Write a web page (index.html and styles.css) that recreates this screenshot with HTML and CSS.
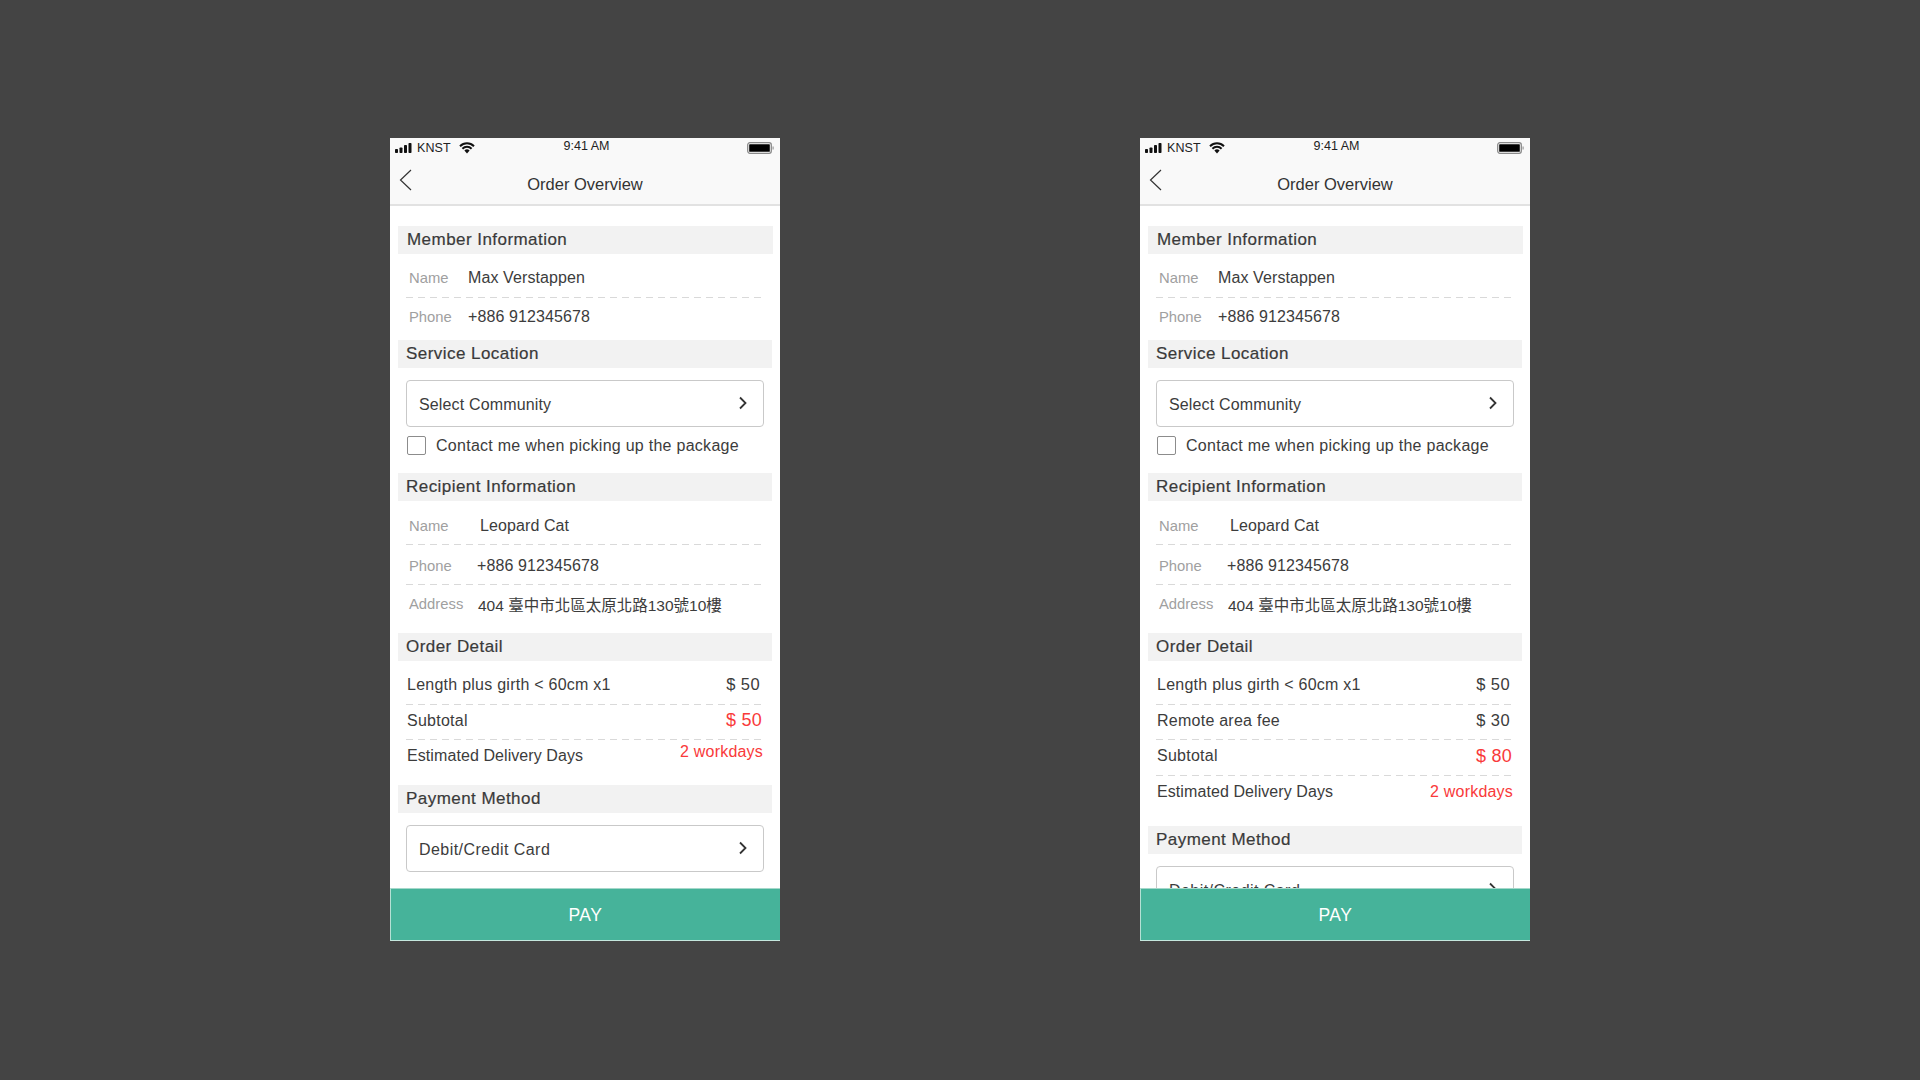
FILE: index.html
```html
<!DOCTYPE html>
<html lang="en">
<head>
<meta charset="utf-8">
<title>Order Overview</title>
<link rel="stylesheet" href="styles.css">
</head>
<body>
<main class="stage">

<section class="phone">
  <header class="status">
    <div class="status-left">
      <svg class="signal" width="18" height="10" viewBox="0 0 18 10"><rect x="0" y="6" width="3" height="4" rx=".8"/><rect x="4.5" y="4.5" width="3" height="5.5" rx=".8"/><rect x="9" y="2" width="3" height="8" rx=".8"/><rect x="13.5" y="0" width="3" height="10" rx=".8"/></svg>
      <span class="carrier">KNST</span>
      <svg class="wifi" width="16" height="12" viewBox="0 0 16 12"><path d="M1 4.2a10 10 0 0 1 14 0M3.4 6.7a6.6 6.6 0 0 1 9.2 0" fill="none" stroke="#111" stroke-width="2"/><path d="M5.4 8.6a3.6 3.6 0 0 1 5.2 0L8 11.4z" fill="#111"/></svg>
    </div>
    <span class="time">9:41 AM</span>
    <div class="status-right">
      <svg width="27" height="12" viewBox="0 0 27 12"><rect x=".7" y=".7" width="23.6" height="10.6" rx="2.2" fill="none" stroke="#8a8a8a" stroke-width="1.3"/><rect x="2.2" y="2.2" width="20.6" height="7.6" rx=".6" fill="#000"/><rect x="25.5" y="4.5" width="1.2" height="3" fill="#999"/></svg>
    </div>
  </header>
  <nav class="nav">
    <svg class="back" width="13" height="22" viewBox="0 0 13 22"><path d="M12 1 1.5 11 12 21" fill="none" stroke="#333" stroke-width="1.2"/></svg>
    <h1 class="title">Order Overview</h1>
  </nav>
  <div class="content">
    <h2 class="head head-first">Member Information</h2>
    <div class="row row-a dash"><span class="label">Name</span><span class="value">Max Verstappen</span></div>
    <div class="row row-b"><span class="label">Phone</span><span class="value">+886 912345678</span></div>

    <h2 class="head">Service Location</h2>
    <div class="select"><span>Select Community</span><svg class="chev" width="10" height="14" viewBox="0 0 10 14"><path d="M2 1.5 7.5 7 2 12.5" fill="none" stroke="#333" stroke-width="1.8"/></svg></div>
    <label class="check"><span class="box"></span><span>Contact me when picking up the package</span></label>

    <h2 class="head">Recipient Information</h2>
    <div class="row row-a dash rn"><span class="label">Name</span><span class="value">Leopard Cat</span></div>
    <div class="row row-c dash rp"><span class="label">Phone</span><span class="value">+886 912345678</span></div>
    <div class="row row-d ra"><span class="label">Address</span><span class="value addr">404 臺中市北區太原北路130號10樓</span></div>

    <h2 class="head">Order Detail</h2>
    <div class="line line-a dash"><span>Length plus girth &lt; 60cm x1</span><span class="price">$ 50</span></div>
    <div class="line line-b dash"><span>Subtotal</span><span class="total">$ 50</span></div>
    <div class="line line-e est-up"><span class="est">Estimated Delivery Days</span><span class="days">2 workdays</span></div>

    <h2 class="head">Payment Method</h2>
    <div class="select"><span class="card">Debit/Credit Card</span><svg class="chev" width="10" height="14" viewBox="0 0 10 14"><path d="M2 1.5 7.5 7 2 12.5" fill="none" stroke="#333" stroke-width="1.8"/></svg></div>
  </div>
  <button class="pay" type="button">PAY</button>
</section>

<section class="phone">
  <header class="status">
    <div class="status-left">
      <svg class="signal" width="18" height="10" viewBox="0 0 18 10"><rect x="0" y="6" width="3" height="4" rx=".8"/><rect x="4.5" y="4.5" width="3" height="5.5" rx=".8"/><rect x="9" y="2" width="3" height="8" rx=".8"/><rect x="13.5" y="0" width="3" height="10" rx=".8"/></svg>
      <span class="carrier">KNST</span>
      <svg class="wifi" width="16" height="12" viewBox="0 0 16 12"><path d="M1 4.2a10 10 0 0 1 14 0M3.4 6.7a6.6 6.6 0 0 1 9.2 0" fill="none" stroke="#111" stroke-width="2"/><path d="M5.4 8.6a3.6 3.6 0 0 1 5.2 0L8 11.4z" fill="#111"/></svg>
    </div>
    <span class="time">9:41 AM</span>
    <div class="status-right">
      <svg width="27" height="12" viewBox="0 0 27 12"><rect x=".7" y=".7" width="23.6" height="10.6" rx="2.2" fill="none" stroke="#8a8a8a" stroke-width="1.3"/><rect x="2.2" y="2.2" width="20.6" height="7.6" rx=".6" fill="#000"/><rect x="25.5" y="4.5" width="1.2" height="3" fill="#999"/></svg>
    </div>
  </header>
  <nav class="nav">
    <svg class="back" width="13" height="22" viewBox="0 0 13 22"><path d="M12 1 1.5 11 12 21" fill="none" stroke="#333" stroke-width="1.2"/></svg>
    <h1 class="title">Order Overview</h1>
  </nav>
  <div class="content">
    <h2 class="head head-first">Member Information</h2>
    <div class="row row-a dash"><span class="label">Name</span><span class="value">Max Verstappen</span></div>
    <div class="row row-b"><span class="label">Phone</span><span class="value">+886 912345678</span></div>

    <h2 class="head">Service Location</h2>
    <div class="select"><span>Select Community</span><svg class="chev" width="10" height="14" viewBox="0 0 10 14"><path d="M2 1.5 7.5 7 2 12.5" fill="none" stroke="#333" stroke-width="1.8"/></svg></div>
    <label class="check"><span class="box"></span><span>Contact me when picking up the package</span></label>

    <h2 class="head">Recipient Information</h2>
    <div class="row row-a dash rn"><span class="label">Name</span><span class="value">Leopard Cat</span></div>
    <div class="row row-c dash rp"><span class="label">Phone</span><span class="value">+886 912345678</span></div>
    <div class="row row-d ra"><span class="label">Address</span><span class="value addr">404 臺中市北區太原北路130號10樓</span></div>

    <h2 class="head">Order Detail</h2>
    <div class="line line-a dash"><span>Length plus girth &lt; 60cm x1</span><span class="price">$ 50</span></div>
    <div class="line line-b dash"><span>Remote area fee</span><span class="price">$ 30</span></div>
    <div class="line line-c dash"><span>Subtotal</span><span class="total">$ 80</span></div>
    <div class="line line-f"><span class="est">Estimated Delivery Days</span><span class="days">2 workdays</span></div>

    <h2 class="head">Payment Method</h2>
    <div class="select"><span class="card">Debit/Credit Card</span><svg class="chev" width="10" height="14" viewBox="0 0 10 14"><path d="M2 1.5 7.5 7 2 12.5" fill="none" stroke="#333" stroke-width="1.8"/></svg></div>
  </div>
  <button class="pay" type="button">PAY</button>
</section>

</main>
</body>
</html>
```
FILE: styles.css
```css
* { box-sizing: border-box; }
html, body { margin: 0; height: 100%; }
body {
  background: #444444;
  font-family: "Liberation Sans", "Noto Sans CJK TC", sans-serif;
  color: #3c3c3c;
  overflow: hidden;
}
.stage {
  display: flex;
  justify-content: center;
  gap: 360px;
  padding-top: 138px;
}
.phone {
  width: 390px;
  height: 803px;
  background: #fff;
  display: flex;
  flex-direction: column;
  overflow: hidden;
}
.status {
  height: 22px;
  background: #f9f9f9;
  display: grid;
  grid-template-columns: 1fr auto 1fr;
  padding: 0 6px 0 5px;
  flex: none;
}
.status-left { display: flex; align-items: center; gap: 4px; padding-bottom: 3px; }
.signal { fill: #111; }
.carrier { font-size: 12.5px; color: #222; letter-spacing: .1px; }
.wifi { margin-left: 4px; }
.time { font-size: 12.5px; color: #222; line-height: 14px; padding-top: 1px; padding-left: 4px; }
.status-right { display: flex; justify-content: flex-end; align-items: center; padding-bottom: 3px; }
.nav {
  height: 46px;
  background: #f9f9f9;
  border-bottom: 2px solid #e2e2e2;
  display: flex;
  justify-content: center;
  flex: none;
  position: relative;
}
.back { position: absolute; left: 9px; top: 9px; }
.title {
  margin: 0;
  padding-top: 1px;
  font-size: 16.5px;
  font-weight: 400;
  line-height: 46px;
  color: #333;
}
.content {
  flex: 1;
  min-height: 0;
  overflow: hidden;
  padding: 20px 8px 0 8px;
  display: flex;
  flex-direction: column;
}
.content > * { flex: none; }
.head {
  margin: 0;
  width: 374px;
  height: 28px;
  background: #f2f2f2;
  padding-left: 8px;
  font-size: 17px;
  font-weight: 400;
  line-height: 28px;
  letter-spacing: .45px;
  color: #3a3a3a;
  -webkit-text-stroke: .2px #3a3a3a;
}
.head-first { width: 375px; padding-left: 9px; }
.row {
  display: flex;
  align-items: center;
  margin: 0 9px 0 8px;
  padding-left: 3px;
  font-size: 16px;
  letter-spacing: .1px;
}
.label { font-size: 14.8px; color: #a0a0a0; letter-spacing: 0; }
.value { color: #3c3c3c; }
.addr { font-size: 15.5px; letter-spacing: 0; }
.dash {
  background-image: repeating-linear-gradient(90deg, #d9d9d9 0 7px, transparent 7px 12px);
  background-size: 100% 1px;
  background-position: left bottom;
  background-repeat: no-repeat;
}
.row-a { height: 44px; padding-top: 3px; }
.row-b { height: 42px; padding-bottom: 5px; }
.row-c { height: 40px; padding-top: 1px; }
.row-d { height: 48px; padding-bottom: 11px; }
.rn { padding-top: 5px; }
.row .label { width: 59px; flex: none; }
.rn .label { width: 71px; }
.rp .label { width: 68px; }
.ra .label { width: 69px; }
.select {
  margin: 12px 8px 0 8px;
  height: 47px;
  border: 1px solid #c9c9c9;
  border-radius: 4px;
  display: flex;
  align-items: center;
  justify-content: space-between;
  padding: 2px 15px 0 12px;
  font-size: 16px;
  letter-spacing: .15px;
}
.card { letter-spacing: .45px; }
.chev { margin-top: -3px; }
.check {
  display: flex;
  align-items: center;
  gap: 10px;
  height: 46px;
  padding: 0 0 9px 9px;
  font-size: 16px;
  letter-spacing: .27px;
}
.box {
  width: 19px;
  height: 19px;
  border: 1.5px solid #8c8c8c;
  border-radius: 2px;
}
.line {
  display: flex;
  justify-content: space-between;
  align-items: center;
  margin: 0 9px 0 8px;
  padding-left: 1px;
  font-size: 16px;
  letter-spacing: .25px;
}
.est { letter-spacing: .08px; }
.line-a { height: 44px; padding-top: 3px; }
.line-b { height: 35px; padding-bottom: 4px; }
.line-c { height: 36px; padding-bottom: 4px; }
.line-e { height: 45px; padding-bottom: 14px; }
.line-f { height: 50px; padding-bottom: 19px; }
.price { padding-right: 3px; font-size: 16.5px; letter-spacing: .4px; }
.total { color: #f93a3a; font-size: 18px; padding-right: 1px; }
.days { color: #f93a3a; font-size: 16px; letter-spacing: .2px; }
.est-up .days { margin-top: -7px; }
.pay {
  flex: none;
  height: 53px;
  width: 100%;
  border: 0;
  border-left: 1px solid #b5e0d4;
  border-top: 1px solid #a5d8ca;
  border-bottom: 1px solid #c5e8de;
  background: #46b39a;
  color: #fff;
  font-family: inherit;
  font-size: 17.5px;
  letter-spacing: .6px;
  padding: 1px 0 0;
}
```
